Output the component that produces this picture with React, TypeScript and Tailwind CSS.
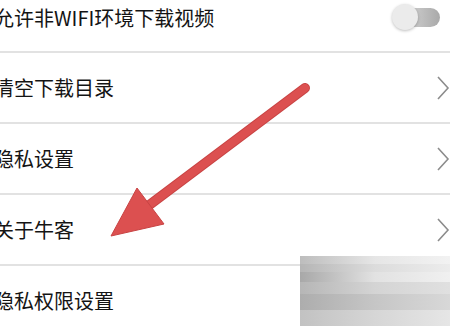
const FONT = { fontFamily: '"Noto Sans CJK SC", "Noto Sans", sans-serif' }

function Chevron() {
  return (
    <svg width="14" height="24" viewBox="0 0 14 24" className="shrink-0">
      <path d="M2 1 L12 12 L2 23" fill="none" stroke="#8c8c8c" strokeWidth="1.6" />
    </svg>
  )
}

function Toggle() {
  return (
    <div className="relative h-[26px] w-[48px]">
      <div className="absolute left-[4px] top-[4px] h-[19px] w-[44px] rounded-full bg-gradient-to-r from-[#e0e0e0] via-[#c4c4c4] to-[#a9a9a9]" />
      <div className="absolute left-0 top-0 h-[26px] w-[26px] rounded-full bg-[#ebebeb] shadow-[0_1px_3px_rgba(0,0,0,0.25)]" />
    </div>
  )
}

const ROWS = ['清空下载目录', '隐私设置', '关于牛客']

export default function App() {
  return (
    <div className="relative h-[326px] w-[450px] overflow-hidden bg-white text-[20px] text-[#141414]" style={FONT}>
      <div className="flex h-[53px] items-start justify-between border-b-2 border-[#e2e2e2] pr-[10px]">
        <span className="-ml-[6px] mt-[3px] leading-[30px]">允许非WIFI环境下载视频</span>
        <div className="mt-[4px]">
          <Toggle />
        </div>
      </div>
      {ROWS.map(label => (
        <div key={label} className="flex h-[71px] items-center justify-between border-b-2 border-[#e2e2e2]">
          <span className="-ml-[6px] leading-[30px]">{label}</span>
          <Chevron />
        </div>
      ))}
      <div className="flex h-[69px] items-center">
        <span className="-ml-[6px] leading-[30px]">隐私权限设置</span>
      </div>

      <svg className="absolute left-0 top-0" width="450" height="326" viewBox="0 0 450 326">
        <line x1="305" y1="88" x2="148" y2="206" stroke="#c84343" strokeWidth="10" strokeLinecap="round" />
        <line x1="305" y1="88" x2="148" y2="206" stroke="#dc5050" strokeWidth="8" strokeLinecap="round" />
        <polygon points="111,236 137,188 164,224" fill="#dc5050" stroke="#c84343" strokeWidth="1" strokeLinejoin="round" />
      </svg>

      <div className="absolute left-[300px] top-[256px] flex h-[70px] w-[150px] flex-col bg-gradient-to-r from-[#b2b2b2] via-[#d0d0d0] to-[#e4e4e4]">
        <div className="h-[8px] w-full bg-gradient-to-r from-[#bdbdbd] via-[#e6e6e6] to-[#f2f2f2]" />
        <div className="h-[8px] w-full bg-gradient-to-r from-[#b5b5b5] via-[#dcdcdc] to-[#ececec]" />
        <div className="h-[10px] w-full bg-gradient-to-r from-[#a8a8a8] via-[#e2e2e2] to-[#f0f0f0]" />
        <div className="h-[12px] w-full bg-gradient-to-r from-[#b6b6b6] via-[#d4d4d4] to-[#e0e0e0]" />
        <div className="h-[16px] w-full bg-gradient-to-r from-[#adadad] via-[#c6c6c6] to-[#d8d8d8]" />
        <div className="flex-1 bg-gradient-to-r from-[#c2c2c2] via-[#d6d6d6] to-[#e6e6e6]" />
      </div>
    </div>
  )
}
